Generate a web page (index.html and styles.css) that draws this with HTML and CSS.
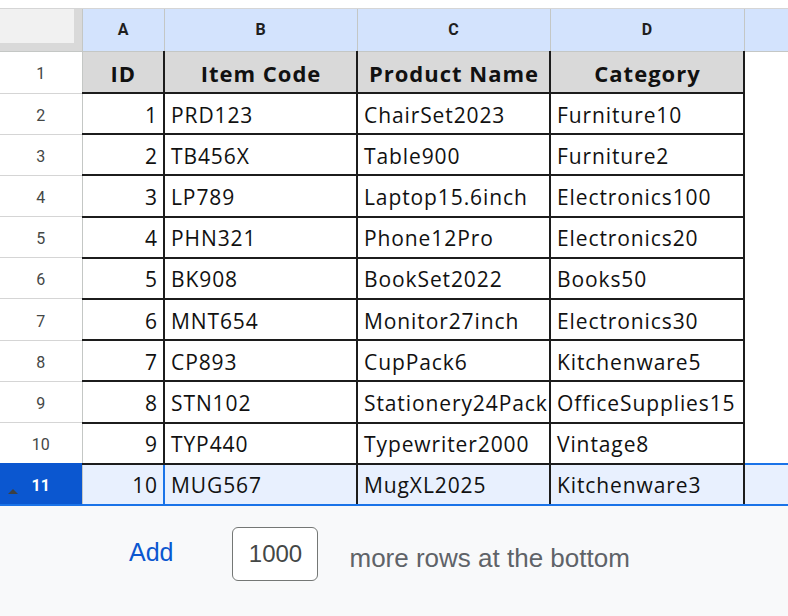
FILE: index.html
```html
<!DOCTYPE html>
<html lang="en">
<head>
  <meta charset="UTF-8">
  <title>Products sheet</title>
  <link rel="stylesheet" href="styles.css">
</head>
<body>

  <div class="top-strip"></div>

  <table class="sheet">
    <colgroup>
      <col class="col-rownum">
      <col class="col-a">
      <col class="col-b">
      <col class="col-c">
      <col class="col-d">
      <col>
    </colgroup>
    <thead>
      <tr>
        <th class="corner"></th>
        <th>A</th>
        <th>B</th>
        <th>C</th>
        <th>D</th>
        <th></th>
      </tr>
    </thead>
    <tbody>
      <tr class="title-row">
        <td class="rownum">1</td>
        <td class="cell head center">ID</td>
        <td class="cell head center">Item Code</td>
        <td class="cell head center">Product Name</td>
        <td class="cell head center">Category</td>
        <td class="blank"></td>
      </tr>
      <tr>
        <td class="rownum">2</td>
        <td class="cell num">1</td>
        <td class="cell">PRD123</td>
        <td class="cell">ChairSet2023</td>
        <td class="cell">Furniture10</td>
        <td class="blank"></td>
      </tr>
      <tr>
        <td class="rownum">3</td>
        <td class="cell num">2</td>
        <td class="cell">TB456X</td>
        <td class="cell">Table900</td>
        <td class="cell">Furniture2</td>
        <td class="blank"></td>
      </tr>
      <tr>
        <td class="rownum">4</td>
        <td class="cell num">3</td>
        <td class="cell">LP789</td>
        <td class="cell">Laptop15.6inch</td>
        <td class="cell">Electronics100</td>
        <td class="blank"></td>
      </tr>
      <tr>
        <td class="rownum">5</td>
        <td class="cell num">4</td>
        <td class="cell">PHN321</td>
        <td class="cell">Phone12Pro</td>
        <td class="cell">Electronics20</td>
        <td class="blank"></td>
      </tr>
      <tr>
        <td class="rownum">6</td>
        <td class="cell num">5</td>
        <td class="cell">BK908</td>
        <td class="cell">BookSet2022</td>
        <td class="cell">Books50</td>
        <td class="blank"></td>
      </tr>
      <tr>
        <td class="rownum">7</td>
        <td class="cell num">6</td>
        <td class="cell">MNT654</td>
        <td class="cell">Monitor27inch</td>
        <td class="cell">Electronics30</td>
        <td class="blank"></td>
      </tr>
      <tr>
        <td class="rownum">8</td>
        <td class="cell num">7</td>
        <td class="cell">CP893</td>
        <td class="cell">CupPack6</td>
        <td class="cell">Kitchenware5</td>
        <td class="blank"></td>
      </tr>
      <tr>
        <td class="rownum">9</td>
        <td class="cell num">8</td>
        <td class="cell">STN102</td>
        <td class="cell">Stationery24Pack</td>
        <td class="cell">OfficeSupplies15</td>
        <td class="blank"></td>
      </tr>
      <tr>
        <td class="rownum">10</td>
        <td class="cell num">9</td>
        <td class="cell">TYP440</td>
        <td class="cell">Typewriter2000</td>
        <td class="cell">Vintage8</td>
        <td class="blank"></td>
      </tr>
      <tr class="selected">
        <td class="rownum"><span class="tri"></span>11</td>
        <td class="cell num active">10</td>
        <td class="cell">MUG567</td>
        <td class="cell">MugXL2025</td>
        <td class="cell">Kitchenware3</td>
        <td class="blank"></td>
      </tr>
    </tbody>
  </table>

  <div class="add-rows">
    <span class="add-link">Add</span>
    <span class="count-box">1000</span>
    <span class="add-text">more rows at the bottom</span>
  </div>

</body>
</html>
```

FILE: styles.css
```css
* {
  box-sizing: border-box;
}

body {
  margin: 0;
  width: 788px;
  height: 616px;
  overflow: hidden;
  background: #f8f9fa;
  font-family: Roboto, Arial, sans-serif;
}

.top-strip {
  height: 9px;
  background: #fff;
  border-bottom: 1px solid #d5d5d5;
}

.sheet {
  width: 788px;
  border-collapse: collapse;
  table-layout: fixed;
  background: #fff;
}

.col-rownum { width: 82px; }
.col-a { width: 82px; }
.col-b { width: 193px; }
.col-c { width: 193px; }
.col-d { width: 194px; }

/* column letters */
.sheet th {
  height: 42px;
  padding: 0;
  background: #d3e3fd;
  border-left: 1px solid #c4c7c5;
  border-bottom: 1px solid #c4c7c5;
  color: #1f1f1f;
  font-size: 16px;
  font-weight: bold;
  text-align: center;
}

.sheet th.corner {
  background: #f1f1f1;
  border-left: none;
  box-shadow: inset -8px -8px 0 #d9d9d9;
}

.sheet td {
  height: 41.2px;
  padding: 0;
}

.sheet .title-row td {
  height: 42px;
}

.rownum {
  position: relative;
  text-align: center;
  color: #444746;
  font-size: 16px;
  padding-top: 3px !important;
  border-bottom: 1px solid #d5d5d5;
  border-right: 1px solid #c4c7c5;
}

.cell {
  padding: 2px 5px 0 6px !important;
  border: 2px solid #1c1c1c;
  color: #111;
  font-family: "Open Sans", "Noto Sans", sans-serif;
  font-size: 21px;
  letter-spacing: 0.9px;
  white-space: nowrap;
  overflow: hidden;
}

.title-row .cell {
  border-top: 1px solid #c4c7c5;
}

.sheet tbody tr td.cell:nth-child(2) {
  border-left: 1px solid #c4c7c5;
}

.cell.head {
  background: #d9d9d9;
  font-weight: bold;
  font-size: 22px;
  letter-spacing: 1px;
}

.center { text-align: center; }
.num { text-align: right; }

.blank {
  border-left: 2px solid #1c1c1c;
}

/* selected last row */
.selected td {
  background: #e8f0fe;
  border-top: 2px solid #1a73e8;
  border-bottom: 2px solid #1a73e8;
}

.selected .rownum {
  background: #0b57d0;
  border-top: 2px solid #0b57d0;
  color: #fff;
  font-weight: bold;
}

.selected td.cell.active {
  border: 2px solid #1a73e8;
}

.tri {
  position: absolute;
  left: 8px;
  bottom: 10px;
  border-left: 5px solid transparent;
  border-right: 5px solid transparent;
  border-bottom: 5px solid #3c4043;
}

/* add rows footer */
.add-rows {
  display: flex;
  align-items: center;
  height: 100px;
  padding-left: 129px;
  font-family: "Liberation Sans", Arial, sans-serif;
}

.add-link {
  color: #0b57d0;
  font-size: 25px;
  margin-right: 59px;
  margin-top: -6px;
}

.count-box {
  width: 86px;
  height: 54px;
  display: flex;
  align-items: center;
  justify-content: center;
  border: 1.5px solid #747775;
  border-radius: 6px;
  background: #fff;
  color: #444746;
  font-size: 24px;
  margin-right: 31px;
  margin-top: -4px;
}

.add-text {
  color: #5f6368;
  font-size: 26px;
  margin-top: 6px;
}
```
